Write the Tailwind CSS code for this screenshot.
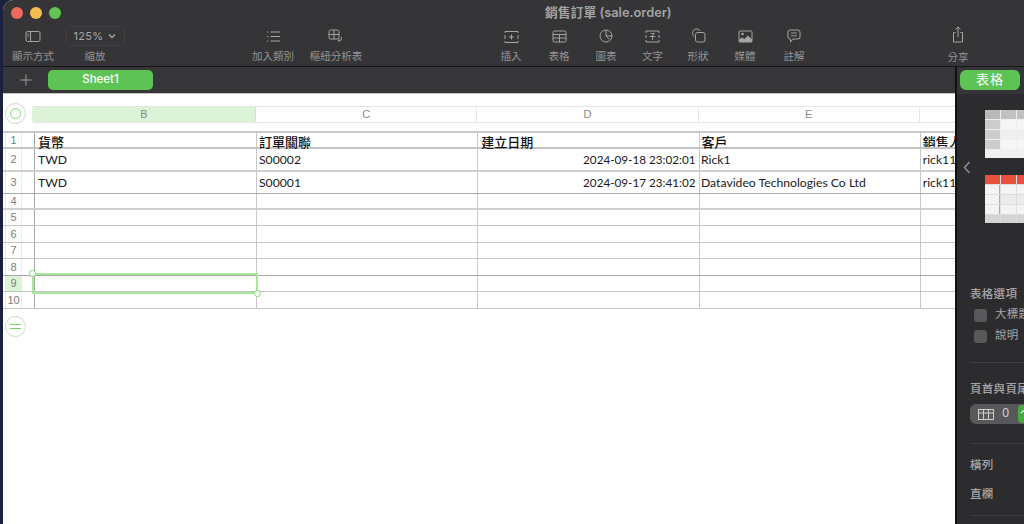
<!DOCTYPE html>
<html>

<head>
    <title>銷售訂單 (sale.order)</title>
    <script src="https://cdn.jsdelivr.net/npm/@tailwindcss/browser@4"></script>
</head>

<body class="bg-[#1b2040] font-['Inter','Noto_Sans_CJK_TC',sans-serif]">
    <div class="w-[1024px] h-[524px] overflow-hidden bg-[#1b2040] pl-[3px]">
        <div class="w-[1021px] h-[524px] rounded-tl-[10px] overflow-hidden flex flex-col bg-white">

            <!-- toolbar -->
            <div class="h-[67px] shrink-0 bg-[#353537] border-b border-[#161618] flex flex-col">
                <div class="h-[25px] shrink-0 flex items-center relative pl-[7.5px] gap-[7.3px]">
                    <span class="w-[12px] h-[12px] rounded-full bg-[#ee6a5f]"></span>
                    <span class="w-[12px] h-[12px] rounded-full bg-[#f5bd4f]"></span>
                    <span class="w-[12px] h-[12px] rounded-full bg-[#61c454]"></span>
                    <span class="absolute left-[542px] top-[4px] text-[12.8px] leading-[17px] font-semibold text-[#a3a3a4]">銷售訂單 (sale.order)</span>
                </div>
                <div class="flex text-[10.5px] leading-[16px] text-[#939394]">
                    <div class="w-[60px] flex flex-col items-center">
                        <svg class="w-[16px] h-[14px] mt-[5px] mb-[5px]" viewBox="0 0 16 14" fill="none" stroke="#a5a5a6"><rect x="1" y="1.5" width="14" height="10" rx="1.5"/><path d="M5.5 1.5v10M2.5 4h1.5M2.5 6h1.5"/></svg>
                        <span>顯示方式</span>
                    </div>
                    <div class="w-[60px] ml-[2px] flex flex-col items-center">
                        <div class="w-[59px] h-[20px] mt-[1px] mb-[3px] rounded-[5px] border border-[#414143] flex items-center justify-center gap-[5px] text-[#a8a8a9] text-[11px] tracking-[0.3px]">125%
                            <svg class="w-[8px] h-[6px]" viewBox="0 0 8 6" fill="none" stroke="#a8a8a9" stroke-width="1.3"><path d="M1 1.5l3 3 3-3"/></svg>
                        </div>
                        <span>縮放</span>
                    </div>
                    <div class="w-[60px] ml-[118px] flex flex-col items-center">
                        <svg class="w-[15px] h-[13px] mt-[5px] mb-[6px]" viewBox="0 0 15 13" fill="none" stroke="#a5a5a6"><path d="M4.5 2H14M4.5 6.5H14M4.5 11H14M1 2h1.2M1 6.5h1.2M1 11h1.2"/></svg>
                        <span>加入類別</span>
                    </div>
                    <div class="w-[60px] ml-[3px] flex flex-col items-center">
                        <svg class="w-[16px] h-[16px] mt-[4px] mb-[4px]" viewBox="0 0 16 16" fill="none" stroke="#a5a5a6"><rect x="1" y="1" width="10" height="9" rx="1.5"/><path d="M6 1v9M1 5.5h10M13.5 8v1.5a2 2 0 0 1-2 2H10M11.5 10.2L10 11.5l1.5 1.3"/></svg>
                        <span class="whitespace-nowrap">樞紐分析表</span>
                    </div>
                    <div class="w-[44px] ml-[123px] flex flex-col items-center">
                        <svg class="w-[15px] h-[14px] mt-[5px] mb-[5px]" viewBox="0 0 15 14" fill="none" stroke="#a5a5a6"><path d="M1 3V1.5h13V3M1 11v1.5h13V11M1 5v4M14 5v4" /><path d="M7.5 4.5v5M5 7h5"/></svg>
                        <span>插入</span>
                    </div>
                    <div class="w-[48px] ml-[2px] flex flex-col items-center">
                        <svg class="w-[15px] h-[13px] mt-[5px] mb-[6px]" viewBox="0 0 15 13" fill="none" stroke="#a5a5a6"><rect x="1" y="1" width="13" height="11" rx="1.5"/><path d="M1 4.5h13M1 8h13M7.5 4.5V12"/></svg>
                        <span>表格</span>
                    </div>
                    <div class="w-[46px] flex flex-col items-center">
                        <svg class="w-[14px] h-[14px] mt-[4px] mb-[6px]" viewBox="0 0 14 14" fill="none" stroke="#a5a5a6"><circle cx="7" cy="7" r="6"/><path d="M7 1v6l3.5 3.5M7 7h6"/></svg>
                        <span>圖表</span>
                    </div>
                    <div class="w-[47px] flex flex-col items-center">
                        <svg class="w-[15px] h-[13px] mt-[5px] mb-[6px]" viewBox="0 0 15 13" fill="none" stroke="#a5a5a6"><path d="M1 3V1h13v2M1 10v2h13v-2M1 5v3M14 5v3"/><path d="M5.5 3.5h4l-2 1.5v5M4.5 6.5h6" stroke-width="0.9"/></svg>
                        <span>文字</span>
                    </div>
                    <div class="w-[44px] flex flex-col items-center">
                        <svg class="w-[15px] h-[15px] mt-[3px] mb-[6px]" viewBox="0 0 15 15" fill="none" stroke="#a5a5a6"><path d="M3.3 8.6A4.2 4.2 0 1 1 9.3 3"/><rect x="4.5" y="4.5" width="9.5" height="9.5" rx="2"/></svg>
                        <span>形狀</span>
                    </div>
                    <div class="w-[50px] flex flex-col items-center">
                        <svg class="w-[15px] h-[13px] mt-[5px] mb-[6px]" viewBox="0 0 15 13"><rect x="1" y="1" width="13" height="11" rx="1" fill="none" stroke="#a5a5a6"/><circle cx="4.5" cy="4" r="1.3" fill="#a5a5a6"/><path d="M1 12V9.5l3-2 2.5 1.5L10 5.5l4 4V12z" fill="#a5a5a6"/></svg>
                        <span>媒體</span>
                    </div>
                    <div class="w-[48px] flex flex-col items-center">
                        <svg class="w-[14px] h-[14px] mt-[4px] mb-[6px]" viewBox="0 0 14 14" fill="none" stroke="#a5a5a6"><path d="M3 1h8a2 2 0 0 1 2 2v5a2 2 0 0 1-2 2H6l-2.5 3v-3H3a2 2 0 0 1-2-2V3a2 2 0 0 1 2-2z"/><path d="M4 4h6M4 6.8h6" stroke-width="0.9"/></svg>
                        <span>註解</span>
                    </div>
                    <div class="w-[44px] ml-[118px] flex flex-col items-center">
                        <svg class="w-[12px] h-[17px] mt-[1px] mb-[7px]" viewBox="0 0 12 17" fill="none" stroke="#a5a5a6"><path d="M3.5 6.5H1.5v9.5h9V6.5H8.5M6 11V1M3.5 3.3L6 1l2.5 2.3"/></svg>
                        <span>分享</span>
                    </div>
                </div>
            </div>

            <div class="flex-1 min-h-0 flex">
                <!-- sheet area -->
                <div class="w-[952px] shrink-0 flex flex-col">
                    <div class="h-[27px] shrink-0 bg-[#363638] border-b border-[#c4c4c4] flex items-center">
                        <svg class="w-[12px] h-[12px] ml-[17px]" viewBox="0 0 12 12" fill="none" stroke="#a0a0a1"><path d="M6 .5v11M.5 6h11"/></svg>
                        <div class="w-[105px] h-[20px] ml-[16px] rounded-[5px] bg-[#5ec355] text-white text-[11.5px] font-medium flex items-center justify-center">Sheet1</div>
                    </div>

                    <div class="flex-1 min-h-0 relative bg-white overflow-hidden text-[#1a1a1a]">
                        <!-- select-all circle -->
                        <div class="absolute left-[2px] top-[9px] w-[21px] h-[21px] rounded-full border border-[#d4d4d4] flex items-center justify-center">
                            <span class="w-[11px] h-[11px] rounded-full border border-[#7fdc72]"></span>
                        </div>

                        <!-- column headers -->
                        <div class="flex ml-[29px] mt-[12px] h-[17px] text-[11px] text-[#8a8a8a] font-['Liberation_Sans',sans-serif] border-y border-[#e6e6e6]">
                            <div class="w-[224px] pl-[1px] bg-[#dcf3d8] rounded-l-[3px] flex items-center justify-center border-r border-[#dcdcdc] text-[#7c8b7a]">B</div>
                            <div class="w-[221.25px] flex items-center justify-center border-r border-[#e6e6e6]">C</div>
                            <div class="w-[221.25px] flex items-center justify-center border-r border-[#e6e6e6]">D</div>
                            <div class="w-[221.25px] flex items-center justify-center border-r border-[#e6e6e6]">E</div>
                            <div class="flex-1"></div>
                        </div>

                        <!-- grid -->
                        <div class="mt-[8px] border-t-2 border-[#c9c9c9] font-['Lato','Noto_Sans_CJK_TC',sans-serif] text-[12.2px] leading-[15px]">
                            <div class="flex h-[16px] border-b-2 border-[#c4c4c4] font-['Noto_Sans_CJK_TC',sans-serif] text-[13px] font-medium text-[#111]">
                                <div class="w-[17px] ml-[2px] shrink-0 text-[11px] text-[#7d7d7d] font-['Liberation_Sans',sans-serif] font-normal text-center border-x border-[#ececec]">1</div>
                                <div class="w-[12px] shrink-0"></div>
                                <div class="w-[222px] shrink-0 pl-[3px] border-l border-[#a8a8a8] whitespace-nowrap leading-[18px]">貨幣</div>
                                <div class="w-[221.25px] shrink-0 pl-[2px] border-l border-[#c8c8c8] whitespace-nowrap leading-[18px]">訂單關聯</div>
                                <div class="w-[221.25px] shrink-0 pl-[3px] border-l border-[#c8c8c8] whitespace-nowrap leading-[18px]">建立日期</div>
                                <div class="w-[221.25px] shrink-0 pl-[2px] border-l border-[#c8c8c8] whitespace-nowrap leading-[18px]">客戶</div>
                                <div class="flex-1 min-w-0 pl-[2px] border-l border-[#c8c8c8] whitespace-nowrap overflow-hidden leading-[18px]">銷售人員</div>
                            </div>
                            <div class="flex h-[23px] border-b-2 border-[#cfcfcf] items-stretch">
                                <div class="w-[17px] ml-[2px] text-[11px] text-[#7d7d7d] font-['Liberation_Sans',sans-serif] flex items-center justify-center border-x border-[#ececec]">2</div>
                                <div class="w-[12px]"></div>
                                <div class="w-[222px] pl-[3px] border-l border-[#a8a8a8] flex items-center">TWD</div>
                                <div class="w-[221.25px] pl-[2px] border-l border-[#c8c8c8] flex items-center">S00002</div>
                                <div class="w-[221.25px] pr-[3px] border-l border-[#c8c8c8] flex items-center justify-end text-[11.7px]">2024-09-18 23:02:01</div>
                                <div class="w-[221.25px] pl-[1.5px] border-l border-[#c8c8c8] flex items-center">Rick1</div>
                                <div class="flex-1 pl-[2px] border-l border-[#c8c8c8] flex items-center whitespace-nowrap overflow-hidden">rick1111</div>
                            </div>
                            <div class="flex h-[22px] border-b border-[#a8a8a8] items-stretch">
                                <div class="w-[17px] ml-[2px] text-[11px] text-[#7d7d7d] font-['Liberation_Sans',sans-serif] flex items-center justify-center border-x border-[#ececec]">3</div>
                                <div class="w-[12px]"></div>
                                <div class="w-[222px] pl-[3px] border-l border-[#a8a8a8] flex items-center">TWD</div>
                                <div class="w-[221.25px] pl-[2px] border-l border-[#c8c8c8] flex items-center">S00001</div>
                                <div class="w-[221.25px] pr-[3px] border-l border-[#c8c8c8] flex items-center justify-end text-[11.7px]">2024-09-17 23:41:02</div>
                                <div class="w-[221.25px] pl-[1.5px] border-l border-[#c8c8c8] flex items-center">Datavideo Technologies Co Ltd</div>
                                <div class="flex-1 pl-[2px] border-l border-[#c8c8c8] flex items-center whitespace-nowrap overflow-hidden">rick1111</div>
                            </div>
                            <div class="flex h-[16px] border-b-2 border-[#cfcfcf]">
                                <div class="w-[17px] ml-[2px] text-[11px] text-[#7d7d7d] font-['Liberation_Sans',sans-serif] flex items-center justify-center border-x border-[#ececec]">4</div>
                                <div class="w-[12px]"></div>
                                <div class="w-[222px] border-l border-[#a8a8a8]"></div><div class="w-[221.25px] border-l border-[#c8c8c8]"></div><div class="w-[221.25px] border-l border-[#c8c8c8]"></div><div class="w-[221.25px] border-l border-[#c8c8c8]"></div><div class="flex-1 border-l border-[#c8c8c8]"></div>
                            </div>
                            <div class="flex h-[16px] border-b border-[#c4c4c4]">
                                <div class="w-[17px] ml-[2px] text-[11px] text-[#7d7d7d] font-['Liberation_Sans',sans-serif] flex items-center justify-center border-x border-[#ececec]">5</div>
                                <div class="w-[12px]"></div>
                                <div class="w-[222px] border-l border-[#a8a8a8]"></div><div class="w-[221.25px] border-l border-[#c8c8c8]"></div><div class="w-[221.25px] border-l border-[#c8c8c8]"></div><div class="w-[221.25px] border-l border-[#c8c8c8]"></div><div class="flex-1 border-l border-[#c8c8c8]"></div>
                            </div>
                            <div class="flex h-[17px] border-b border-[#c4c4c4]">
                                <div class="w-[17px] ml-[2px] text-[11px] text-[#7d7d7d] font-['Liberation_Sans',sans-serif] flex items-center justify-center border-x border-[#ececec]">6</div>
                                <div class="w-[12px]"></div>
                                <div class="w-[222px] border-l border-[#a8a8a8]"></div><div class="w-[221.25px] border-l border-[#c8c8c8]"></div><div class="w-[221.25px] border-l border-[#c8c8c8]"></div><div class="w-[221.25px] border-l border-[#c8c8c8]"></div><div class="flex-1 border-l border-[#c8c8c8]"></div>
                            </div>
                            <div class="flex h-[16px] border-b border-[#c4c4c4]">
                                <div class="w-[17px] ml-[2px] text-[11px] text-[#7d7d7d] font-['Liberation_Sans',sans-serif] flex items-center justify-center border-x border-[#ececec]">7</div>
                                <div class="w-[12px]"></div>
                                <div class="w-[222px] border-l border-[#a8a8a8]"></div><div class="w-[221.25px] border-l border-[#c8c8c8]"></div><div class="w-[221.25px] border-l border-[#c8c8c8]"></div><div class="w-[221.25px] border-l border-[#c8c8c8]"></div><div class="flex-1 border-l border-[#c8c8c8]"></div>
                            </div>
                            <div class="flex h-[17px] border-b border-[#a8a8a8]">
                                <div class="w-[17px] ml-[2px] text-[11px] text-[#7d7d7d] font-['Liberation_Sans',sans-serif] flex items-center justify-center border-x border-[#ececec]">8</div>
                                <div class="w-[12px]"></div>
                                <div class="w-[222px] border-l border-[#a8a8a8]"></div><div class="w-[221.25px] border-l border-[#c8c8c8]"></div><div class="w-[221.25px] border-l border-[#c8c8c8]"></div><div class="w-[221.25px] border-l border-[#c8c8c8]"></div><div class="flex-1 border-l border-[#c8c8c8]"></div>
                            </div>
                            <div class="flex h-[16px] border-b border-[#c4c4c4]">
                                <div class="w-[17px] ml-[2px] text-[11px] text-[#7d7d7d] font-['Liberation_Sans',sans-serif] flex items-center justify-center bg-[#dcf3d8]">9</div>
                                <div class="w-[12px]"></div>
                                <div class="w-[222px] border-l border-[#a8a8a8]"></div><div class="w-[221.25px] border-l border-[#c8c8c8]"></div><div class="w-[221.25px] border-l border-[#c8c8c8]"></div><div class="w-[221.25px] border-l border-[#c8c8c8]"></div><div class="flex-1 border-l border-[#c8c8c8]"></div>
                            </div>
                            <div class="flex h-[17px] border-b border-[#c4c4c4]">
                                <div class="w-[17px] ml-[2px] text-[11px] text-[#7d7d7d] font-['Liberation_Sans',sans-serif] flex items-center justify-center border-x border-[#ececec]">10</div>
                                <div class="w-[12px]"></div>
                                <div class="w-[222px] border-l border-[#a8a8a8]"></div><div class="w-[221.25px] border-l border-[#c8c8c8]"></div><div class="w-[221.25px] border-l border-[#c8c8c8]"></div><div class="w-[221.25px] border-l border-[#c8c8c8]"></div><div class="flex-1 border-l border-[#c8c8c8]"></div>
                            </div>
                        </div>

                        <!-- add row/col handle -->
                        <div class="absolute left-[2px] top-[222px] w-[21px] h-[21px] rounded-full border border-[#d4d4d4] flex flex-col items-center justify-center gap-[3px]">
                            <span class="w-[11px] h-px bg-[#6fd862]"></span>
                            <span class="w-[11px] h-px bg-[#6fd862]"></span>
                        </div>

                        <!-- cell selection -->
                        <div class="absolute left-[29px] top-[179px] w-[226px] h-[21px] border-2 border-[#a6e79a]"></div>
                        <span class="absolute left-[26px] top-[176px] w-[7px] h-[7px] rounded-full bg-white border-[1.5px] border-[#7cd96e]"></span>
                        <span class="absolute left-[251px] top-[196px] w-[7px] h-[7px] rounded-full bg-white border-[1.5px] border-[#7cd96e]"></span>
                    </div>
                </div>

                <!-- inspector -->
                <div class="flex-1 min-w-0 bg-[#2c2c2f] border-l-2 border-[#111113] text-[#a6a6a8] text-[11.5px] tracking-[0.3px] overflow-hidden whitespace-nowrap">
                    <div class="h-[27px] bg-[#353537] pl-[3px] pt-[3px]">
                        <div class="w-[60px] h-[20px] rounded-[6px] bg-[#5ec355] text-white text-[13px] flex items-center justify-center tracking-[1px]">表格</div>
                    </div>
                    <div class="flex">
                        <svg class="w-[8px] h-[13px] shrink-0 ml-[6px] mt-[67px]" viewBox="0 0 8 13" fill="none" stroke="#8e8e90" stroke-width="1.5"><path d="M6.5 1L1.5 6.5l5 5.5"/></svg>
                        <div class="ml-[14px] mt-[16px] shrink-0">
                            <div class="w-[64px] h-[48px] bg-[#eeeeee] grid grid-cols-[15px_15px_15px_15px] grid-rows-[9px_9px_9px_9px_8px] gap-px">
                                <div class="bg-[#b9b9b9]"></div><div class="bg-[#c1c1c1]"></div><div class="bg-[#c1c1c1]"></div><div class="bg-[#c1c1c1]"></div>
                                <div class="bg-[#cdcdcd]"></div><div class="bg-[#f6f6f6]"></div><div class="bg-[#f6f6f6]"></div><div class="bg-[#f6f6f6]"></div>
                                <div class="bg-[#cdcdcd]"></div><div class="bg-[#efefef]"></div><div class="bg-[#efefef]"></div><div class="bg-[#efefef]"></div>
                                <div class="bg-[#cdcdcd]"></div><div class="bg-[#f6f6f6]"></div><div class="bg-[#f6f6f6]"></div><div class="bg-[#f6f6f6]"></div>
                                <div class="bg-[#f0f0f0]"></div><div class="bg-[#f0f0f0]"></div><div class="bg-[#f0f0f0]"></div><div class="bg-[#f0f0f0]"></div>
                            </div>
                            <div class="w-[64px] h-[48px] mt-[17px] bg-[#dddddd] grid grid-cols-[15px_15px_15px_15px] grid-rows-[9px_9px_9px_9px_8px] gap-px">
                                <div class="bg-[#e85040]"></div><div class="bg-[#e85040]"></div><div class="bg-[#e85040]"></div><div class="bg-[#e85040]"></div>
                                <div class="bg-[#f4f4f4] border-r border-[#aaaaaa]"></div><div class="bg-[#f4f4f4]"></div><div class="bg-[#f4f4f4]"></div><div class="bg-[#f4f4f4]"></div>
                                <div class="bg-[#f4f4f4] border-r border-[#aaaaaa]"></div><div class="bg-[#ebebeb]"></div><div class="bg-[#ebebeb]"></div><div class="bg-[#ebebeb]"></div>
                                <div class="bg-[#f4f4f4] border-r border-[#aaaaaa]"></div><div class="bg-[#f4f4f4]"></div><div class="bg-[#f4f4f4]"></div><div class="bg-[#f4f4f4]"></div>
                                <div class="bg-[#d4d4d4]"></div><div class="bg-[#d4d4d4]"></div><div class="bg-[#d4d4d4]"></div><div class="bg-[#d4d4d4]"></div>
                            </div>
                        </div>
                    </div>
                    <div class="pl-[13px] mt-[63px]">
                        <div class="font-medium leading-[16px]">表格選項</div>
                        <div class="flex items-center gap-[8px] ml-[4px] mt-[6px] h-[14px]"><span class="w-[13px] h-[13px] shrink-0 rounded-[3px] bg-[#59595b]"></span><span>大標題</span></div>
                        <div class="flex items-center gap-[8px] ml-[4px] mt-[7px] h-[14px]"><span class="w-[13px] h-[13px] shrink-0 rounded-[3px] bg-[#59595b]"></span><span>說明</span></div>
                        <div class="h-px bg-[#3f3f42] mt-[19px]"></div>
                        <div class="font-medium leading-[16px] mt-[18px]">頁首與頁尾</div>
                        <div class="flex items-center h-[20px] mt-[7px] rounded-l-[6px] bg-[#59595b] pl-[8px] text-[#cfcfcf]">
                            <svg class="w-[16px] h-[11px] shrink-0" viewBox="0 0 16 11" fill="none" stroke="#d0d0d0"><rect x="0.5" y="0.5" width="15" height="10"/><path d="M5.5 0.5v10M10.5 0.5v10M0.5 4h15" /></svg>
                            <span class="ml-[8px]">0</span>
                            <span class="ml-[8px] w-[12px] h-[18px] shrink-0 rounded-l-[4px] bg-[#4aa843] text-white text-[10px] flex items-center justify-center">⌃</span>
                        </div>
                        <div class="h-px bg-[#3f3f42] mt-[19px]"></div>
                        <div class="font-medium leading-[16px] mt-[13px]">橫列</div>
                        <div class="font-medium leading-[16px] mt-[13px]">直欄</div>
                        <div class="h-px bg-[#3f3f42] mt-[13px]"></div>
                    </div>
                </div>
            </div>
        </div>
    </div>
</body>

</html>
